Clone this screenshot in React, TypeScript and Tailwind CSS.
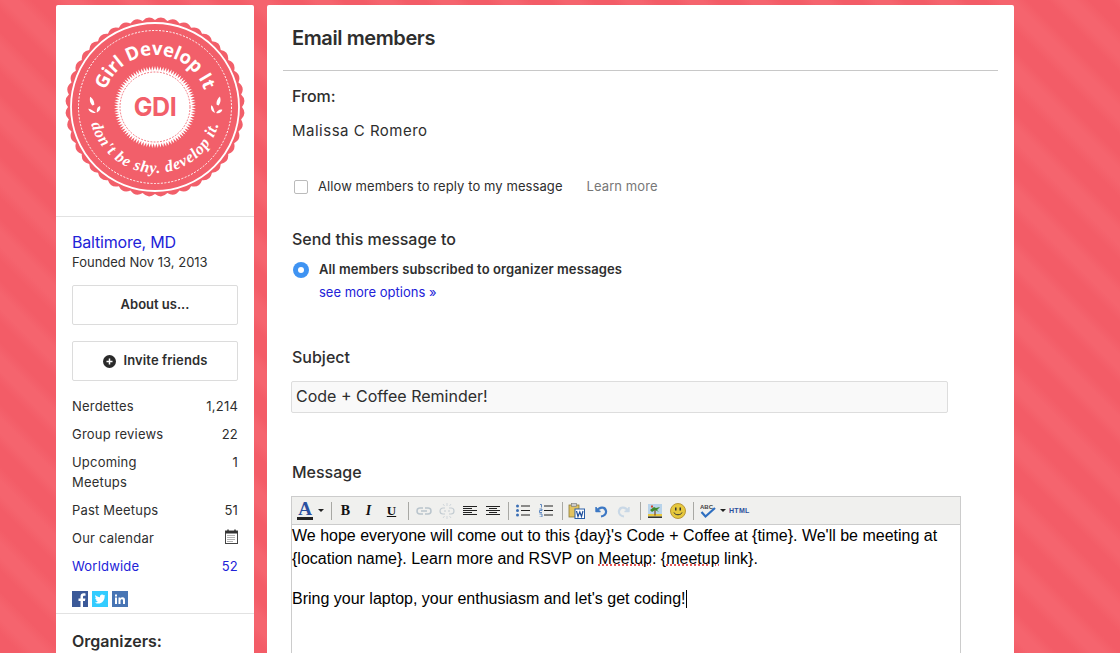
import type { ReactNode } from "react";

const scallop = (() => {
  const bumps = 44;
  const pts: string[] = [];
  for (let i = 0; i < bumps; i++) {
    const a0 = (i / bumps) * Math.PI * 2;
    const a1 = ((i + 0.5) / bumps) * Math.PI * 2;
    const a2 = ((i + 1) / bumps) * Math.PI * 2;
    const p = (a: number, r: number) => `${(90 + Math.cos(a) * r).toFixed(2)} ${(90 + Math.sin(a) * r).toFixed(2)}`;
    if (i === 0) pts.push(`M${p(a0, 87)}`);
    pts.push(`Q${p(a1, 92.5)} ${p(a2, 87)}`);
  }
  return pts.join(" ") + "Z";
})();

const burst = (() => {
  const n = 90;
  const pts: string[] = [];
  for (let i = 0; i < n; i++) {
    const a0 = (i / n) * Math.PI * 2;
    const a1 = ((i + 0.5) / n) * Math.PI * 2;
    pts.push(`${(90 + Math.cos(a0) * 36.5).toFixed(2)},${(90 + Math.sin(a0) * 36.5).toFixed(2)}`);
    pts.push(`${(90 + Math.cos(a1) * 41).toFixed(2)},${(90 + Math.sin(a1) * 41).toFixed(2)}`);
  }
  return pts.join(" ");
})();

function GdiLogo() {
  return (
    <svg width="180" height="180" viewBox="0 0 180 180">
      <defs>
        <path id="topArc" d="M90 90m-52 0a52 52 0 0 1 104 0" />
        <path id="bottomArc" d="M90 90m-66 0a66 66 0 0 0 132 0" />
      </defs>
      <path d={scallop} fill="#f25f6a" />
      <circle cx="90" cy="90" r="84" fill="none" stroke="#fff" strokeWidth="1.8" />
      <circle cx="90" cy="90" r="76.5" fill="none" stroke="#fff" strokeWidth="1" strokeDasharray="2 1.500" />
      <polygon points={burst} fill="#fff" />
      <circle cx="90" cy="90" r="35" fill="none" stroke="#f25f6a" strokeWidth="0.9" strokeDasharray="1.800 1.400" />
      <text x="90" y="99" textAnchor="middle" fill="#f25f6a" className="font-['Inter',sans-serif]" fontWeight="700" fontSize="25" letterSpacing="-0.5">
        GDI
      </text>
      <text fill="#fff" className="font-['Open_Sans',sans-serif]" fontWeight="700" fontSize="18.5" letterSpacing="-0.2">
        <textPath href="#topArc" startOffset="50%" textAnchor="middle">
          Girl Develop It
        </textPath>
      </text>
      <text fill="#fff" className="font-['Liberation_Serif',serif]" fontStyle="italic" fontWeight="700" fontSize="16" letterSpacing="0.8">
        <textPath href="#bottomArc" startOffset="50%" textAnchor="middle">
          don't be shy. develop it.
        </textPath>
      </text>
      <g fill="#fff">
        <path d="M28 88c-2-4-.5-7 .5-9 1.500 2 3 5 1.500 9zM29 96c-2-2-4-6-6-6 0 3 2 6 6 6zM30 96c1-3 2-5 5-5 0 3-2 5-5 5z" transform="rotate(-18 29 90)" />
        <path d="M151 88c-2-4-.5-7 .5-9 1.500 2 3 5 1.500 9zM152 96c-2-2-4-6-6-6 0 3 2 6 6 6zM153 96c1-3 2-5 5-5 0 3-2 5-5 5z" transform="rotate(18 152 90)" />
      </g>
    </svg>
  );
}

function Stat({ label, value, link }: { label: string; value: ReactNode; link?: boolean }) {
  return (
    <div className={`flex justify-between text-[13px] leading-5 tracking-[0.2px] ${link ? "text-[#2222d8]" : "text-[#2e2e2e]"}`}>
      <span className="max-w-[110px]">{label}</span>
      <span>{value}</span>
    </div>
  );
}

function Sep({ className }: { className: string }) {
  return <div className={`h-[18px] w-px shrink-0 bg-[#a8a8a4] ${className}`} />;
}

function Tool({ children }: { children: ReactNode }) {
  return <div className="flex h-full w-[23px] shrink-0 items-center justify-center">{children}</div>;
}

function Lines({ center }: { center?: boolean }) {
  return (
    <svg width="14" height="12" viewBox="0 0 14 12" stroke="#222" strokeWidth="1">
      <path d={center ? "M0 1.500h14M3 3.500h8M0 5.500h14M3 7.500h8M0 9.500h14" : "M0 1.500h14M0 3.500h9M0 5.500h14M0 7.500h9M0 9.500h14"} />
    </svg>
  );
}

function Toolbar() {
  return (
    <div className="flex h-[28px] items-center border-b border-[#ccc] bg-[#f0f0ee]">
      <div className="flex w-[26px] shrink-0 flex-col items-center pt-px">
        <span className="font-['Liberation_Serif',serif] text-[19px] leading-[14px] font-bold text-[#2a4f9f]">A</span>
        <div className="mt-px h-[3px] w-[16px] bg-[#222]" />
      </div>
      <div className="h-0 w-0 border-x-[3px] border-t-[3px] border-x-transparent border-t-[#222]" />
      <Sep className="mr-[2px] ml-[7px]" />
      <Tool>
        <span className="font-['Liberation_Serif',serif] text-[14px] leading-none font-bold text-[#111]">B</span>
      </Tool>
      <Tool>
        <span className="font-['Liberation_Serif',serif] text-[14px] leading-none font-bold text-[#111] italic">I</span>
      </Tool>
      <Tool>
        <span className="font-['Liberation_Serif',serif] text-[13px] leading-none font-bold text-[#111] underline">U</span>
      </Tool>
      <Sep className="mr-[3px] ml-[5px]" />
      <Tool>
        <svg width="16" height="10" viewBox="0 0 16 10" fill="none" stroke="#b9c4cc" strokeWidth="1.500">
          <path d="M7 2H4a3 3 0 0 0 0 6h3M9 2h3a3 3 0 0 1 0 6H9M5 5h6" />
        </svg>
      </Tool>
      <Tool>
        <svg width="16" height="16" viewBox="0 0 16 16" fill="none" stroke="#c3ccd2" strokeWidth="1.200">
          <path d="M6 5H4a3 3 0 0 0 0 6h2M10 5h2a3 3 0 0 1 0 6h-2M5 8h2M9 8h2" />
          <path d="M8 0v3M8 13v3M4 1l1.500 2M12 1l-1.500 2M4 15l1.500-2M12 15l-1.500-2" strokeWidth="0.7" />
        </svg>
      </Tool>
      <Tool>
        <Lines />
      </Tool>
      <Tool>
        <Lines center />
      </Tool>
      <Sep className="mr-[2px] ml-[4px]" />
      <Tool>
        <svg width="14" height="13" viewBox="0 0 14 13">
          <g fill="#3b6fb5">
            <circle cx="1.500" cy="2" r="1.500" />
            <circle cx="1.500" cy="6.500" r="1.500" />
            <circle cx="1.500" cy="11" r="1.500" />
          </g>
          <path d="M5 2h9M5 6.500h9M5 11h9" stroke="#222" strokeWidth="1" />
        </svg>
      </Tool>
      <Tool>
        <svg width="14" height="13" viewBox="0 0 14 13">
          <path d="M1 0.500h1.500v3M0.500 5h2.500v1.500H0.500V8.500h2.500M0.500 10H3v3H0.500" fill="none" stroke="#3b6fb5" strokeWidth="0.8" />
          <path d="M5 2h9M5 6.500h9M5 11h9" stroke="#222" strokeWidth="1" />
        </svg>
      </Tool>
      <Sep className="mr-[3px] ml-[5px]" />
      <Tool>
        <svg width="17" height="16" viewBox="0 0 17 16" className="-ml-[3px]">
          <rect x="1" y="2" width="10" height="12" fill="#e3c35f" stroke="#8a7a3a" strokeWidth="0.8" />
          <rect x="3.500" y="0.500" width="5" height="3" fill="#ccc" stroke="#777" strokeWidth="0.6" />
          <rect x="7" y="6" width="9.500" height="9.500" fill="#fff" stroke="#2b5ea8" />
          <path d="M8.500 8l1.500 5.500L11.800 9l1.700 4.500L15 8" fill="none" stroke="#1f4f9c" strokeWidth="1.200" />
        </svg>
      </Tool>
      <Tool>
        <svg width="14" height="14" viewBox="0 0 14 14" fill="none">
          <path d="M2 3v4.500h4.500" fill="#3d78c4" stroke="#3d78c4" strokeWidth="1.400" strokeLinejoin="round" />
          <path d="M3 7c2-4 8-5 9 0 .5 3-2 5-5 5.500" stroke="#3d78c4" strokeWidth="2.200" />
        </svg>
      </Tool>
      <Tool>
        <svg width="14" height="14" viewBox="0 0 14 14" fill="none">
          <path d="M12 3v4.500H7.500" fill="#c9d8e6" stroke="#c9d8e6" strokeWidth="1.400" strokeLinejoin="round" />
          <path d="M11 7C9 3 3 2 2 7c-.5 3 2 5 5 5.500" stroke="#c9d8e6" strokeWidth="2.200" />
        </svg>
      </Tool>
      <Sep className="mr-[2px] ml-[5px]" />
      <Tool>
        <svg width="14" height="14" viewBox="0 0 14 14">
          <rect width="14" height="14" fill="#b8d3ea" />
          <rect y="10" width="14" height="2.500" fill="#e8c840" />
          <rect y="12.500" width="14" height="1.500" fill="#333" />
          <path d="M7 11.500V6" stroke="#7a4a1c" strokeWidth="1.200" />
          <path d="M2 6l4-3 2 1 4-1-3 3 2 2-4-2-3 2z" fill="#3d8a2b" />
          <rect x="3" y="1.500" width="2" height="2" fill="#d4462c" />
        </svg>
      </Tool>
      <Tool>
        <svg width="16" height="16" viewBox="0 0 16 16">
          <circle cx="8" cy="8" r="7.500" fill="#e6c83c" stroke="#b8963a" />
          <rect x="5" y="4.500" width="1.500" height="3" fill="#333" />
          <rect x="9.500" y="4.500" width="1.500" height="3" fill="#333" />
          <path d="M4 9.500c1 3 7 3 8 0" fill="none" stroke="#333" />
        </svg>
      </Tool>
      <Sep className="mr-[3px] ml-[4px]" />
      <Tool>
        <svg width="17" height="16" viewBox="0 0 17 16">
          <text x="0" y="6" fontSize="6" fontWeight="700" fill="#444" className="font-['Liberation_Sans',sans-serif]">
            ABC
          </text>
          <path d="M1.500 9l4 4.500L15 5" fill="none" stroke="#2f6fc0" strokeWidth="2.200" />
        </svg>
      </Tool>
      <div className="h-0 w-0 border-x-[3px] border-t-[3px] border-x-transparent border-t-[#222]" />
      <span className="ml-[3px] font-['Liberation_Sans',sans-serif] text-[7px] leading-none font-bold tracking-[0.3px] text-[#2b4f9c]">HTML</span>
    </div>
  );
}

export default function App() {
  return (
    <div className="flex h-[653px] items-start gap-[13px] overflow-hidden bg-[#f35e69] bg-[repeating-linear-gradient(45deg,#f35c67_0px,#f35c67_14px,#f5646e_24px,#f5646e_34px,#f35c67_44px)] pt-[5px] pl-[56px] font-['Inter',sans-serif] text-[#2e2e2e] antialiased">
      <aside className="h-[680px] w-[198px] shrink-0 rounded-t-[2px] bg-white">
        <div className="flex h-[212px] justify-center border-b border-[#e2e2e2] pt-[12px]">
          <GdiLogo />
        </div>
        <div className="border-b border-[#e2e2e2] px-4 pb-[6px]">
          <div className="pt-[15px] text-base leading-5 tracking-[-0.2px] text-[#2222d8]">Baltimore, MD</div>
          <div className="text-[13px] leading-5">Founded Nov 13, 2013</div>
          <button className="mt-[13px] flex h-[40px] w-full items-center justify-center rounded-[2px] border border-[#dcdcdc] text-[13px] font-semibold">
            About us...
          </button>
          <button className="mt-[16px] flex h-[40px] w-full items-center justify-center gap-[8px] rounded-[2px] border border-[#dcdcdc] text-[13px] font-semibold tracking-[0.1px]">
            <svg width="13" height="13" viewBox="0 0 13 13">
              <circle cx="6.500" cy="6.500" r="6.500" fill="#2a2a2a" />
              <path d="M6.500 3.500v6M3.500 6.500h6" stroke="#fff" strokeWidth="1.500" />
            </svg>
            Invite friends
          </button>
          <div className="mt-[15px] flex flex-col gap-2">
            <Stat label="Nerdettes" value="1,214" />
            <Stat label="Group reviews" value="22" />
            <Stat label="Upcoming Meetups" value="1" />
            <Stat label="Past Meetups" value="51" />
            <Stat
              label="Our calendar"
              value={
                <svg width="13" height="15" viewBox="0 0 13 15" className="mt-[1px]">
                  <rect x="0.500" y="2" width="12" height="12.500" fill="#fff" stroke="#444" />
                  <rect x="0.500" y="2" width="12" height="2.500" fill="#333" />
                  <path d="M3 0.500v2M10 0.500v2" stroke="#333" strokeWidth="1.500" />
                  <path d="M2.500 6.500h8M2.500 8.500h8M2.500 10.500h8M2.500 12.500h5" stroke="#666" strokeDasharray="1 1" />
                </svg>
              }
            />
            <Stat label="Worldwide" value="52" link />
          </div>
          <div className="mt-[15px] flex gap-[4px]">
            <svg width="16" height="16" viewBox="0 0 16 16">
              <rect width="16" height="16" fill="#3b5998" />
              <path d="M11 16v-6h2l.4-2.500H11V6c0-.8.3-1.300 1.300-1.300h1.200V2.500C13 2.400 12.400 2.300 11.600 2.300 9.800 2.300 8.500 3.400 8.500 5.600v1.900h-2V10h2v6z" fill="#fff" />
            </svg>
            <svg width="16" height="16" viewBox="0 0 16 16">
              <rect width="16" height="16" fill="#33ccff" />
              <path d="M13.500 4.600c-.4.200-.8.300-1.300.4.500-.3.800-.7 1-1.300-.4.300-.9.500-1.400.6a2.200 2.200 0 0 0-3.800 2C6.200 6.200 4.600 5.300 3.500 4c-.6 1-.3 2.300.7 3-.4 0-.7-.1-1-.3 0 1.100.8 2 1.800 2.200-.3.100-.7.100-1 0 .3.900 1.100 1.500 2.100 1.500-1 .8-2.200 1.100-3.300 1 3 1.900 6 1.300 7.800-.6 1.500-1.500 2.100-3.500 2-5.500.5-.3.900-.7 1.200-1.200z" fill="#fff" />
            </svg>
            <svg width="16" height="16" viewBox="0 0 16 16">
              <rect width="16" height="16" fill="#4875b4" />
              <path d="M3 6.500h2V13H3zM3 3.500h2v2H3zM6.500 6.500h2v1c.4-.7 1.100-1.200 2.100-1.200 1.800 0 2.400 1.100 2.400 3V13h-2V9.800c0-.9-.2-1.600-1.100-1.600S8.500 8.900 8.500 9.800V13h-2z" fill="#fff" />
            </svg>
          </div>
        </div>
        <div className="px-4 pt-[17px] text-base leading-5 font-semibold">Organizers:</div>
      </aside>

      <main className="h-[680px] w-[747px] shrink-0 rounded-t-[2px] bg-white px-4">
        <div className="flex h-[66px] items-center border-b border-[#c8c8c8] pl-[9px] text-xl font-semibold tracking-[-0.4px]">Email members</div>
        <div className="pl-[9px]">
          <div className="pt-[15px] text-base leading-5 font-medium">From:</div>
          <div className="mt-[15px] text-[15px] leading-5 tracking-[0.5px]">Malissa C Romero</div>
          <div className="mt-[36px] flex h-5 items-center text-[13px] tracking-[0.08px]">
            <div className="ml-[2px] h-[14px] w-[14px] rounded-[2px] border border-[#bbb] bg-white" />
            <span className="ml-[10px]">Allow members to reply to my message</span>
            <span className="ml-[24px] text-[#777]">Learn more</span>
          </div>
          <div className="mt-[32px] text-base leading-5 font-medium">Send this message to</div>
          <div className="mt-[11px] flex h-5 items-center text-[13px] font-semibold tracking-[0.1px]">
            <div className="ml-[1px] flex h-[16px] w-[16px] items-center justify-center rounded-full bg-[#3f93f2]">
              <div className="h-[6px] w-[6px] rounded-full bg-white" />
            </div>
            <span className="ml-[10px]">All members subscribed to organizer messages</span>
          </div>
          <div className="mt-[2px] ml-[27px] text-[13px] leading-5 text-[#2222d8]">see more options »</div>
          <div className="mt-[45px] text-base leading-5 font-medium">Subject</div>
          <div className="mt-[14px] -ml-px flex h-[32px] w-[657px] items-center rounded-[2px] border border-[#ddd] bg-[#f9f9f9] pb-[2px] pl-[4px] text-base">
            Code + Coffee Reminder!
          </div>
          <div className="mt-[49px] text-base leading-5 font-medium">Message</div>
          <div className="mt-[14px] -ml-px h-[200px] w-[670px] border border-[#ccc]">
            <Toolbar />
            <div className="-mt-px font-['Liberation_Sans',sans-serif] text-base leading-[23px] text-black">
              <p>
                We hope everyone will come out to this {"{day}"}'s Code + Coffee at {"{time}"}. We'll be meeting at {"{location name}"}. Learn more and RSVP on{" "}
                <span className="underline decoration-[#e02020] decoration-dotted">Meetup</span>: {"{"}
                <span className="underline decoration-[#e02020] decoration-dotted">meetup</span> link{"}"}.
              </p>
              <p className="mt-[17px] flex items-center">
                Bring your laptop, your enthusiasm and let's get coding!
                <span className="h-[18px] w-px bg-black" />
              </p>
            </div>
          </div>
        </div>
      </main>
    </div>
  );
}
